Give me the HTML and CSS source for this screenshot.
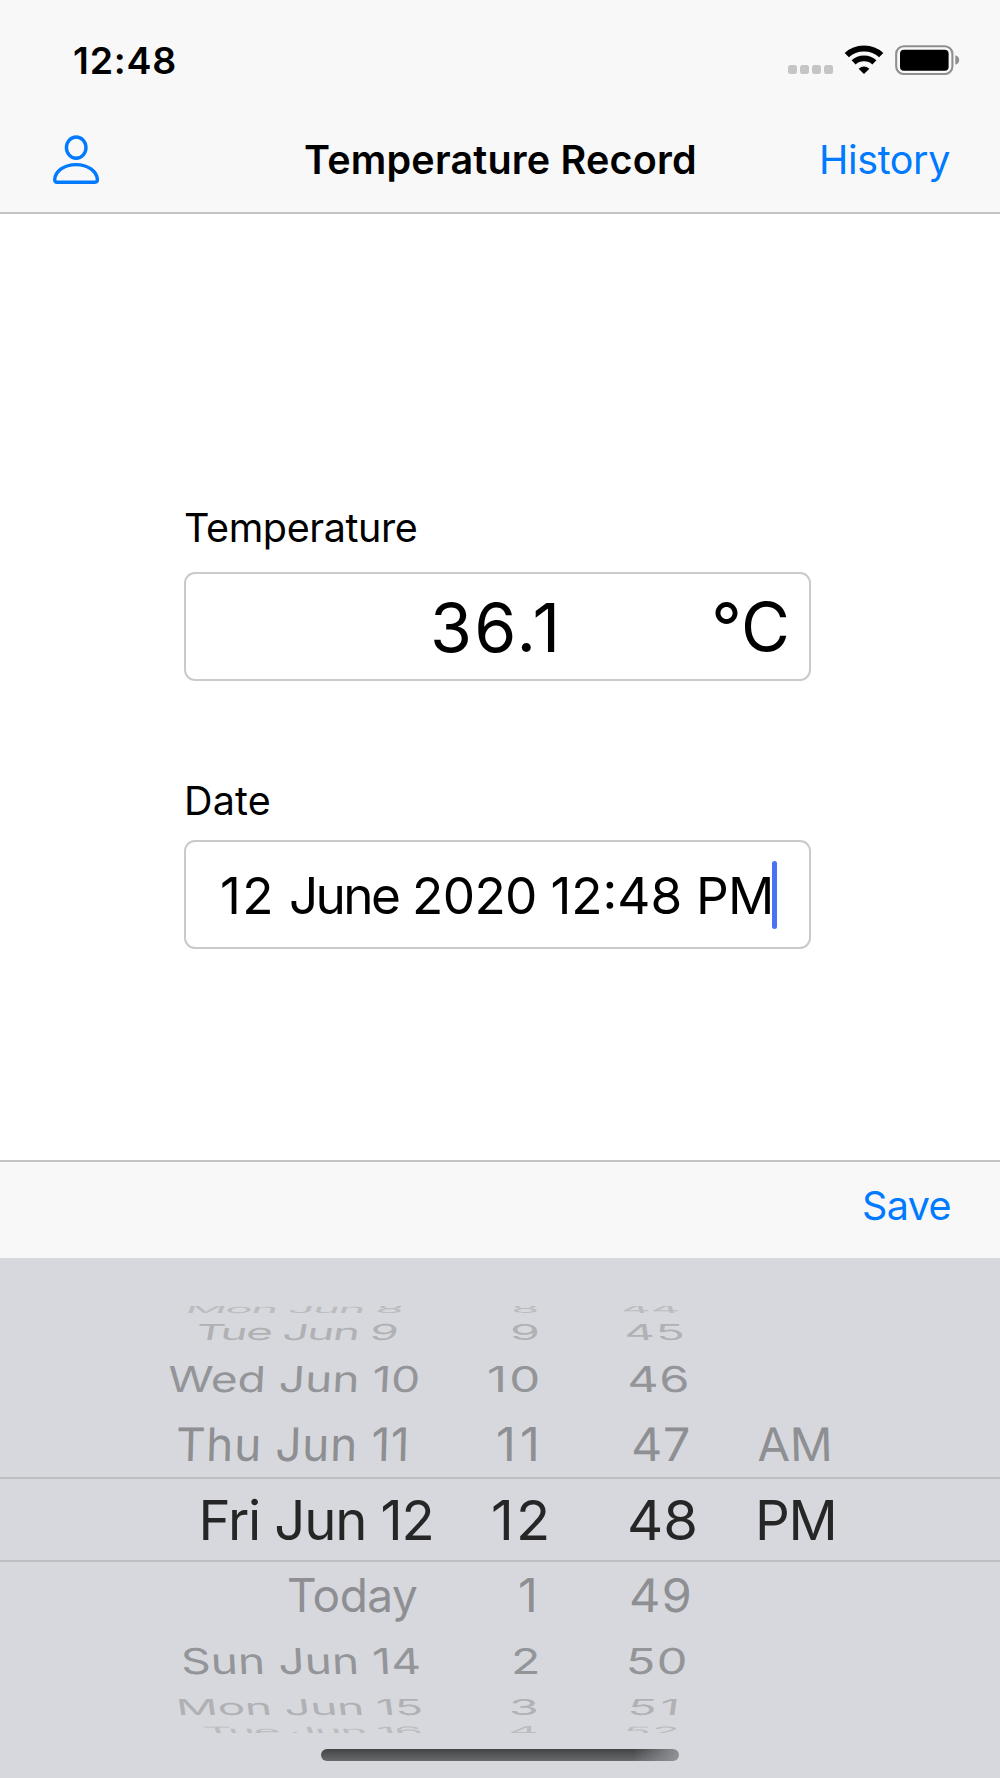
FILE: index.html
```html
<!DOCTYPE html>
<html lang="en">
<head>
<meta charset="utf-8">
<title>Temperature Record</title>
<link rel="stylesheet" href="styles.css">
</head>
<body>
<div class="screen">
  <header class="header">
    <div class="status">
      <span class="clock">12:48</span>
      <div class="indicators">
        <div class="signal"><i></i><i></i><i></i><i></i></div>
        <svg class="wifi" width="40" height="30" viewBox="0 0 40 30" fill="none" stroke="#000">
          <path d="M2.8 10.2C12 1.3 28 1.3 37.2 10.2" stroke-width="6"/>
          <path d="M9.6 17.4C15.2 12 24.8 12 30.4 17.4" stroke-width="5.8"/>
          <path d="M14.6 23.8Q20 19 25.4 23.8L20 29Z" fill="#000" stroke="none"/>
        </svg>
        <svg class="battery" width="66" height="30" viewBox="0 0 66 30">
          <rect x="1.2" y="1.2" width="56.2" height="27.8" rx="7.5" fill="none" stroke="#8f8f8f" stroke-width="2.1"/>
          <rect x="5" y="4.7" width="48.6" height="21" rx="4" fill="#000"/>
          <path d="M60.3 10.2Q64.2 11.5 64.2 15T60.3 19.8Z" fill="#8f8f8f"/>
        </svg>
      </div>
    </div>
    <nav class="nav">
      <svg class="person" width="48" height="50" viewBox="0 0 48 50" fill="none" stroke="#007aff" stroke-width="3.4">
        <ellipse cx="24.2" cy="12.6" rx="9.8" ry="10.6"/>
        <path d="M5 47.2Q2.7 47.2 2.7 44.5C3.3 36.3 12 29.6 24 29.6S44.7 36.3 45.4 44.5Q45.4 47.2 43 47.2Z"/>
      </svg>
      <h1 class="title">Temperature Record</h1>
      <a class="link history">History</a>
    </nav>
  </header>

  <main class="form">
    <label class="label">Temperature</label>
    <div class="field temperature">
      <span class="reading">36.1</span>
      <span class="unit">°C</span>
    </div>
    <label class="label date-label">Date</label>
    <div class="field date">
      <span class="date-value"><span class="date-day">12</span> <span class="date-month">June</span> 2020 <span class="date-time">12:48</span> PM</span><span class="caret"></span>
    </div>
  </main>

  <div class="toolbar"><a class="link save">Save</a></div>

  <section class="picker">
    <div class="row up4"><span class="day">Mon Jun 8</span><span class="hour">8</span><span class="minute">44</span></div>
    <div class="row up3"><span class="day">Tue Jun 9</span><span class="hour">9</span><span class="minute">45</span></div>
    <div class="row up2"><span class="day">Wed Jun 10</span><span class="hour">10</span><span class="minute">46</span></div>
    <div class="row up1"><span class="day">Thu Jun 11</span><span class="hour">11</span><span class="minute">47</span><span class="period">AM</span></div>
    <div class="row selected"><span class="day">Fri Jun 12</span><span class="hour">12</span><span class="minute">48</span><span class="period">PM</span></div>
    <div class="row down1"><span class="day">Today</span><span class="hour">1</span><span class="minute">49</span></div>
    <div class="row down2"><span class="day">Sun Jun 14</span><span class="hour">2</span><span class="minute">50</span></div>
    <div class="row down3"><span class="day">Mon Jun 15</span><span class="hour">3</span><span class="minute">51</span></div>
    <div class="row down4"><span class="day">Tue Jun 16</span><span class="hour">4</span><span class="minute">52</span></div>
    <div class="home-indicator"></div>
  </section>
</div>
</body>
</html>
```
FILE: styles.css
```css
* { box-sizing: border-box; }

body {
  margin: 0;
  background: #fff;
  color: #000;
  font-family: Inter, "Liberation Sans", sans-serif;
  font-size: 39.5px;
}

.screen {
  display: flex;
  flex-direction: column;
  width: 1000px;
  height: 1778px;
  overflow: hidden;
}

/* Status bar and navigation */
.header {
  height: 214px;
  background: #f8f8f8;
  border-bottom: 2px solid #c4c4c4;
}

.status {
  display: flex;
  justify-content: space-between;
  height: 120px;
  padding: 0 39px 0 73px;
}

.clock {
  font-size: 37.5px;
  font-weight: 600;
  line-height: 121px;
  letter-spacing: .8px;
}

.indicators {
  display: flex;
  align-items: flex-start;
  padding-top: 44.5px;
}

.signal {
  display: flex;
  gap: 3.5px;
  margin: 20.5px 11.5px 0 0;
}

.signal i {
  width: 8.5px;
  height: 8.5px;
  border-radius: 2.5px;
  background: #c5c5c5;
}

.wifi { margin-right: 11px; }

.nav {
  display: grid;
  grid-template-columns: 252px 1fr 252px;
  align-items: center;
  height: 80px;
  padding: 0 50px 0 52px;
  line-height: 80px;
}

.title {
  margin: 0;
  font-size: 39.5px;
  font-weight: 600;
  letter-spacing: .2px;
  white-space: nowrap;
}

.link { color: #007aff; }

.history {
  justify-self: end;
  letter-spacing: -.4px;
}

/* Form */
.form {
  display: flex;
  flex-direction: column;
  height: 946px;
  padding: 290px 0 0 184px;
}

.label {
  height: 68px;
  line-height: 49px;
  letter-spacing: -.4px;
}

.date-label {
  height: 63px;
  margin-top: 96px;
  letter-spacing: .2px;
}

.field {
  display: flex;
  align-items: center;
  width: 627px;
  height: 109px;
  border: 2px solid #cacaca;
  border-radius: 11px;
  white-space: nowrap;
}

.temperature {
  justify-content: space-between;
  padding: 0 19px 0 244px;
  font-size: 67px;
}

.reading {
  font-size: 68px;
  letter-spacing: 2.3px;
}

.date {
  padding-left: 34px;
  font-size: 51.3px;
}

.date-value { letter-spacing: -.68px; }
.date-day { letter-spacing: 1.5px; }
.date-month { letter-spacing: -2.6px; }
.date-time { letter-spacing: 0; }

.caret {
  width: 5px;
  height: 68px;
  margin-left: -2px;
  border-radius: 2.5px;
  background: #4a72f5;
}

/* Keyboard accessory */
.toolbar {
  display: flex;
  justify-content: flex-end;
  height: 98px;
  padding-right: 49px;
  background: #f8f8f8;
  border-top: 2px solid #c4c4c4;
  line-height: 89px;
}

.save { letter-spacing: -.6px; }

/* Date wheel: rows flatten and fade away from the selected one */
.picker {
  display: flex;
  flex-direction: column;
  flex: 1;
  padding-top: 48px;
  background: #d7d8dd;
}

.row {
  display: grid;
  grid-template-columns: 330px 140px 130px 1fr;
  padding-left: 150px;
  font-size: 46px;
  color: #8e8f92;
  white-space: nowrap;
}

.row span {
  justify-self: start;
  letter-spacing: 1px;
  transform-origin: 0 50%;
}

.row .day { letter-spacing: 0; }

.up4 { height: 13px; line-height: 2px; overflow: hidden; color: #bbbcc0; }
.up3 { height: 27px; line-height: 27px; color: #b0b1b4; }
.up2 { height: 65px; line-height: 66px; color: #949598; }
.up1 { height: 66px; line-height: 66px; }
.selected {
  height: 85px;
  border-top: 2px solid #bdbec2;
  border-bottom: 2px solid #bdbec2;
  line-height: 82px;
  font-size: 54.5px;
  color: #262626;
}
.down1 { height: 66px; line-height: 67px; }
.down2 { height: 65px; line-height: 66px; color: #949598; }
.down3 { height: 28px; line-height: 28px; color: #b0b1b4; }
.down4 { height: 12px; line-height: 20px; overflow: hidden; color: #bbbcc0; }

.up4 .day { margin-left: 35px; letter-spacing: -1.6px; transform: skewX(-20deg) scaleY(.25); }
.up4 .hour { margin-left: 31px; transform: scaleY(.25); }
.up4 .minute { margin-left: 1px; letter-spacing: 0; transform: skewX(20deg) scaleY(.25); }

.up3 .day { margin-left: 46px; letter-spacing: -1.6px; transform: skewX(-10deg) scaleY(.48); }
.up3 .hour { margin-left: 30px; transform: scale(1.05, .48); }
.up3 .minute { margin-left: 4px; transform: skewX(8deg) scale(1.03, .48); }

.up2 .day { margin-left: 18px; letter-spacing: 0; transform: skewX(-3deg) scaleY(.775); }
.up2 .hour { margin-left: 7px; letter-spacing: 2px; transform: scale(1.07, .775); }
.up2 .minute { margin-left: 7px; transform: skewX(3deg) scale(1.05, .775); }

.up1 .day { margin-left: 26px; letter-spacing: .6px; transform: skewX(-1.5deg); }
.up1 .hour { margin-left: 16px; letter-spacing: 4px; transform: scaleX(1.06); }
.up1 .minute { margin-left: 11px; transform: skewX(1deg) scaleX(1.05); }
.up1 .period { margin-left: 7px; letter-spacing: 0; transform: skewX(1.5deg) scaleX(1.03); }

.selected .day { margin-left: 48.5px; letter-spacing: -1.17px; }
.selected .hour { margin-left: 10.5px; letter-spacing: 2px; transform: scaleX(1.03); }
.selected .minute { margin-left: 7px; letter-spacing: 0; transform: scaleX(1.03); }
.selected .period { margin-left: 5px; letter-spacing: -1.2px; }

.down1 .day { margin-left: 137px; letter-spacing: -.5px; }
.down1 .hour { margin-left: 38px; transform: scaleX(1.06); }
.down1 .minute { margin-left: 8.5px; transform: skewX(-1deg) scaleX(1.06); }

.down2 .day { margin-left: 31px; letter-spacing: .1px; transform: skewX(3deg) scaleY(.775); }
.down2 .hour { margin-left: 31px; transform: scale(1.05, .775); }
.down2 .minute { margin-left: 6px; transform: skewX(-3deg) scale(1.06, .775); }

.down3 .day { margin-left: 26px; letter-spacing: -.3px; transform: skewX(8deg) scaleY(.48); }
.down3 .hour { margin-left: 29px; transform: scale(1.05, .48); }
.down3 .minute { margin-left: 8px; letter-spacing: 3px; transform: skewX(-8deg) scale(1.04, .48); }

.down4 .day { margin-left: 53px; letter-spacing: -1.6px; transform: skewX(20deg) scaleY(.25); }
.down4 .hour { margin-left: 28.5px; transform: scaleY(.25); }
.down4 .minute { margin-left: 3px; letter-spacing: 0; transform: skewX(-20deg) scaleY(.25); }

.up4 span { margin-top: -4px; }

.home-indicator {
  width: 358px;
  height: 12px;
  margin: 16px 0 0 321px;
  border-radius: 6px;
  background:
    linear-gradient(100deg, transparent 87%, #939498 100%),
    linear-gradient(#434446, #68696b);
}
```
